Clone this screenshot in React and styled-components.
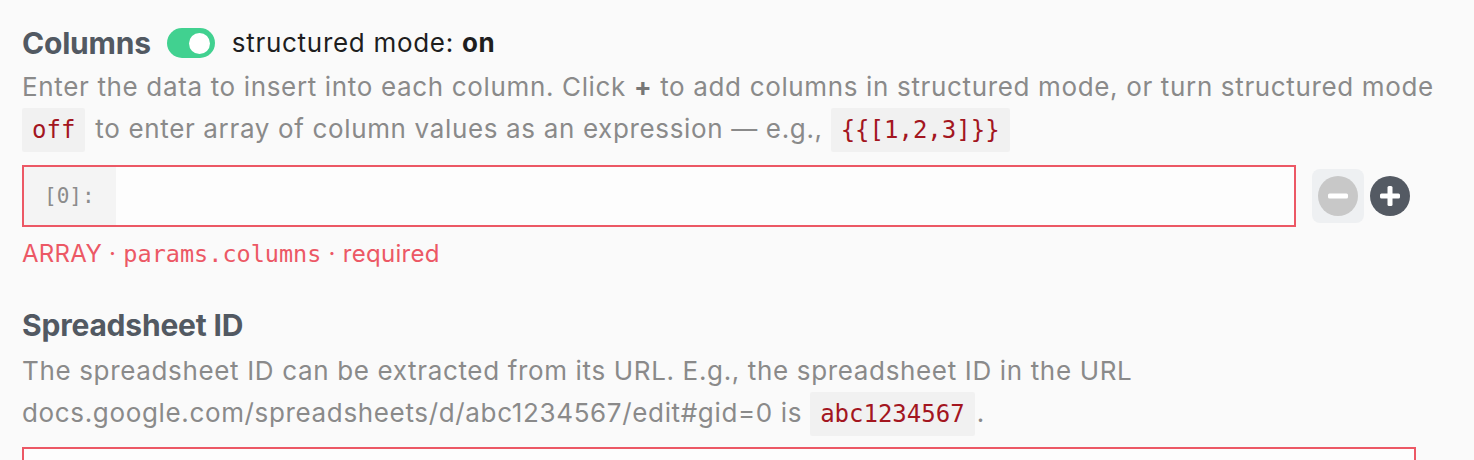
import React from "react";
import styled, { createGlobalStyle } from "styled-components";

const GlobalStyle = createGlobalStyle`
  html, body {
    margin: 0;
    padding: 0;
    background: #fafafa;
  }
  body {
    font-family: Inter, "Noto Sans", "Liberation Sans", sans-serif;
    -webkit-font-smoothing: antialiased;
  }
`;

const Page = styled.div`
  padding: 27px 22px 0 22px;
  width: 1430px;
  box-sizing: content-box;
`;

const Field = styled.section`
  display: flex;
  flex-direction: column;
  margin-bottom: ${(p) => p.$after || 0}px;
`;

const HeaderRow = styled.div`
  display: flex;
  align-items: center;
  min-height: 31px;
  margin-bottom: ${(p) => p.$gap || 0}px;
`;

const Title = styled.h2`
  margin: 0;
  font-size: 30px;
  line-height: 26px;
  font-weight: 700;
  color: #525962;
  letter-spacing: -0.2px;
`;

const Toggle = styled.button`
  position: relative;
  width: 48px;
  height: 30px;
  border: none;
  padding: 0;
  margin: 0 17px 0 16px;
  border-radius: 15px;
  background: ${(p) => (p.$on ? "#41d190" : "#cfd3d8")};
  cursor: pointer;
  flex-shrink: 0;

  &::after {
    content: "";
    position: absolute;
    top: 5px;
    left: ${(p) => (p.$on ? "22px" : "5px")};
    width: 21px;
    height: 21px;
    border-radius: 50%;
    background: #ffffff;
  }
`;

const ModeLabel = styled.span`
  font-size: 26px;
  line-height: 26px;
  letter-spacing: 0.7px;
  color: #1e1e1e;

  b {
    font-weight: 700;
  }
`;

const Description = styled.p`
  margin: 0 0 ${(p) => p.$after || 0}px 0;
  font-size: 26px;
  line-height: 42px;
  letter-spacing: 0.65px;
  color: #8a8a8a;

  strong {
    font-weight: 700;
    color: #777;
  }
`;

const Code = styled.code`
  font-family: "DejaVu Sans Mono", "Liberation Mono", monospace;
  font-size: 24px;
  letter-spacing: 0;
  color: #a3161f;
  background: #f1f1f1;
  padding: 8px 10px;
  margin-right: 2px;
  border-radius: 2px;
`;

const ArrayRow = styled.div`
  display: flex;
  align-items: center;
  gap: 16px;
  margin-right: 36px;
`;

const InputBox = styled.div`
  flex: 1;
  display: flex;
  align-items: stretch;
  height: 62px;
  box-sizing: border-box;
  border: 2px solid #ec5865;
  background: #fdfdfd;
`;

const IndexLabel = styled.span`
  display: flex;
  align-items: center;
  padding: 0 21px 0 20px;
  background: #f4f4f4;
  font-family: "DejaVu Sans Mono", "Liberation Mono", monospace;
  font-size: 21px;
  color: #8c8c8c;
`;

const TextInput = styled.input`
  flex: 1;
  border: none;
  outline: none;
  background: transparent;
  font-family: inherit;
  font-size: 24px;
  padding: 0 16px;
`;

const Buttons = styled.div`
  display: flex;
  align-items: center;
`;

const IconButton = styled.button`
  width: 52px;
  height: 54px;
  border: none;
  padding: 0;
  display: flex;
  align-items: center;
  justify-content: center;
  border-radius: 8px;
  background: ${(p) => (p.$active ? "#eef0f2" : "transparent")};
  cursor: ${(p) => (p.disabled ? "default" : "pointer")};
`;

const Meta = styled.div`
  margin-top: 12px;
  font-size: 24px;
  line-height: 30px;
  letter-spacing: 0.3px;
  color: #ec5865;

  code {
    font-family: "DejaVu Sans Mono", "Liberation Mono", monospace;
    font-size: 23.5px;
    letter-spacing: 0;
  }
`;

const MinusIcon = () => (
  <svg width="40" height="40" viewBox="0 0 40 40">
    <circle cx="20" cy="20" r="20" fill="#c8c8c8" />
    <rect x="10" y="17.5" width="20" height="5" rx="1.5" fill="#ffffff" />
  </svg>
);

const PlusIcon = () => (
  <svg width="40" height="40" viewBox="0 0 40 40">
    <circle cx="20" cy="20" r="20" fill="#545a63" />
    <rect x="10" y="17.5" width="20" height="5" rx="1.5" fill="#ffffff" />
    <rect x="17.5" y="10" width="5" height="20" rx="1.5" fill="#ffffff" />
  </svg>
);

export default function App() {
  return (
    <>
      <GlobalStyle />
      <Page>
        <Field $after={40}>
          <HeaderRow $gap={8}>
            <Title>Columns</Title>
            <Toggle $on aria-label="structured mode" />
            <ModeLabel>
              structured mode: <b>on</b>
            </ModeLabel>
          </HeaderRow>
          <Description $after={14}>
            Enter the data to insert into each column. Click <strong>+</strong> to add
            columns in structured mode, or turn structured mode <Code>off</Code> to enter
            array of column values as an expression — e.g., <Code>{"{{[1,2,3]}}"}</Code>
          </Description>
          <ArrayRow>
            <InputBox>
              <IndexLabel>[0]:</IndexLabel>
              <TextInput />
            </InputBox>
            <Buttons>
              <IconButton $active disabled aria-label="remove">
                <MinusIcon />
              </IconButton>
              <IconButton aria-label="add">
                <PlusIcon />
              </IconButton>
            </Buttons>
          </ArrayRow>
          <Meta>
            ARRAY · <code>params.columns</code> · required
          </Meta>
        </Field>

        <Field>
          <HeaderRow $gap={10}>
            <Title>Spreadsheet ID</Title>
          </HeaderRow>
          <Description $after={12}>
            The spreadsheet ID can be extracted from its URL. E.g., the spreadsheet ID in
            the URL docs.google.com/spreadsheets/d/abc1234567/edit#gid=0 is{" "}
            <Code>abc1234567</Code>.
          </Description>
          <ArrayRow>
            <InputBox>
              <TextInput />
            </InputBox>
          </ArrayRow>
        </Field>
      </Page>
    </>
  );
}
